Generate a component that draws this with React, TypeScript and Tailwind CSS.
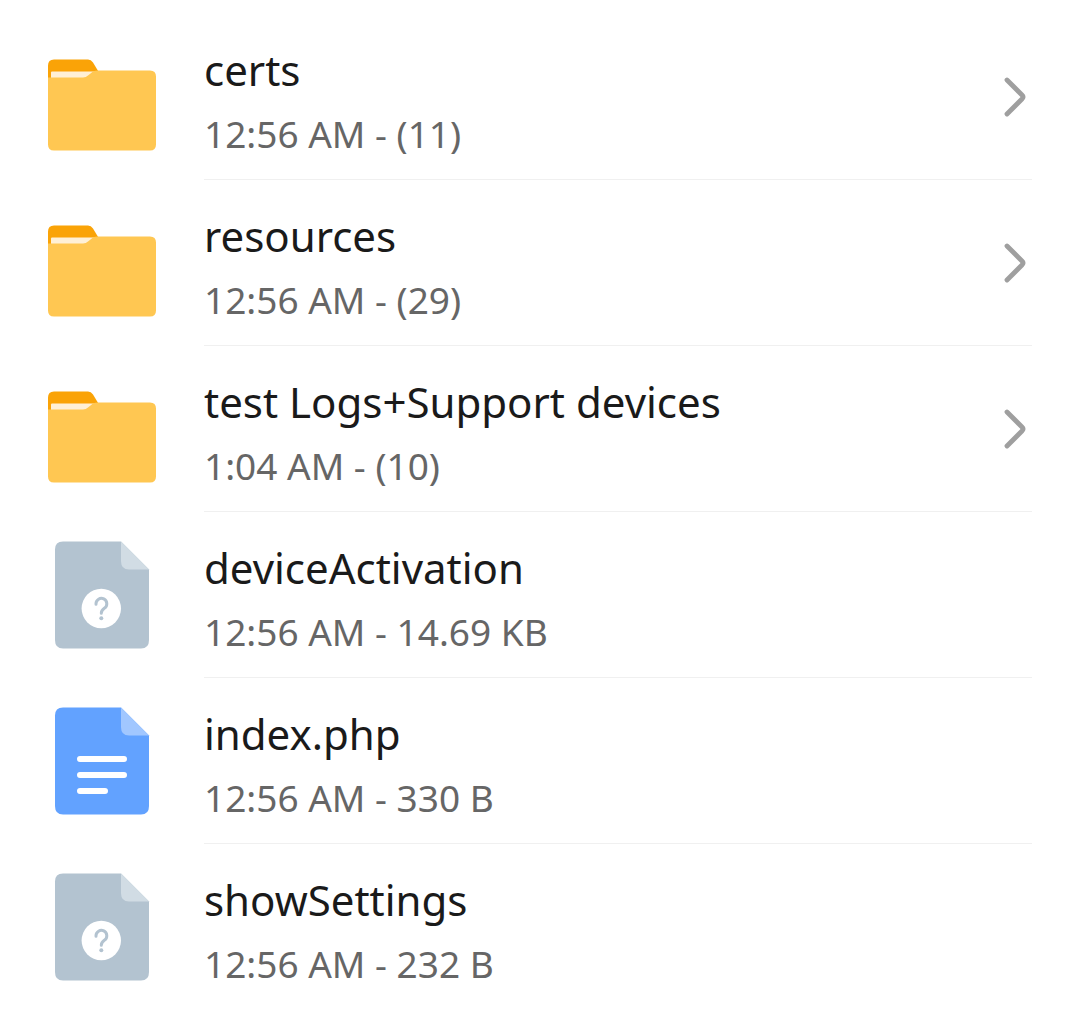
type Kind = "folder" | "unknown" | "text";

type Entry = { name: string; detail: string; kind: Kind };

const entries: Entry[] = [
  { name: "certs", detail: "12:56 AM - (11)", kind: "folder" },
  { name: "resources", detail: "12:56 AM - (29)", kind: "folder" },
  { name: "test Logs+Support devices", detail: "1:04 AM - (10)", kind: "folder" },
  { name: "deviceActivation", detail: "12:56 AM - 14.69 KB", kind: "unknown" },
  { name: "index.php", detail: "12:56 AM - 330 B", kind: "text" },
  { name: "showSettings", detail: "12:56 AM - 232 B", kind: "unknown" },
];

function FolderIcon() {
  return (
    <svg width="108" height="108" viewBox="0 -8.5 108 108" aria-hidden="true">
      <path d="M0 28V14Q0 8 6 8H40Q43 8 45 11L51 21V28Z" fill="#faa307" />
      <path d="M4 20H50L42 28H4Q3 28 3 26V21Q3 20 4 20Z" fill="#fff0d6" />
      <path d="M0 26H35Q38 26 40 24L45 20Q47 19 50 19H102Q108 19 108 25V93Q108 99 102 99H6Q0 99 0 93Z" fill="#ffc752" />
    </svg>
  );
}

function FileIcon({ kind }: { kind: Kind }) {
  const isText = kind === "text";
  return (
    <svg width="108" height="108" viewBox="0 0 108 108" aria-hidden="true">
      <path
        d="M15 0.5H73L101 28.5V99Q101 107.5 93 107.5H15Q7 107.5 7 99V8.5Q7 0.5 15 0.5Z"
        fill={isText ? "#62a2ff" : "#b3c3d0"}
      />
      <path d="M73 0.5L101 28.5H81Q73 28.5 73 20Z" fill={isText ? "#a1c7ff" : "#d1dce4"} />
      {isText ? (
        <path d="M32 52H76M32 68H76M32 84H57" stroke="#fff" strokeWidth="6" strokeLinecap="round" />
      ) : (
        <>
          <circle cx="53.3" cy="67.5" r="19.7" fill="#fff" />
          <path
            d="M48 63.2V62.8A5.4 5.4 0 1 1 56.6 67.1C54 68.9 53.3 69.8 53.3 72.2"
            fill="none"
            stroke="#b3c3d0"
            strokeWidth="3"
            strokeLinecap="round"
          />
          <circle cx="53.3" cy="77.2" r="2" fill="#b3c3d0" />
        </>
      )}
    </svg>
  );
}

function Chevron() {
  return (
    <svg className="shrink-0" width="32" height="44" viewBox="0 -1 32 44" aria-hidden="true">
      <path
        d="M7 5L22 20Q24 22 22 24L7 39"
        fill="none"
        stroke="#9f9f9f"
        strokeWidth="4.8"
        strokeLinecap="round"
      />
    </svg>
  );
}

export default function App() {
  return (
    <main className="min-h-screen bg-white pt-[14px] pb-2 font-['Noto_Sans',sans-serif]">
      <ul>
        {entries.map((entry) => (
          <li key={entry.name} className="group">
            <button type="button" className="flex w-full items-stretch gap-12 px-12 text-left">
              <span className="flex shrink-0 items-center">
                {entry.kind === "folder" ? <FolderIcon /> : <FileIcon kind={entry.kind} />}
              </span>
              <span className="flex min-w-0 flex-1 items-center justify-between border-b border-[#f0f0f0] pb-[1px] group-last:border-transparent">
                <span className="flex min-w-0 flex-col gap-1 pt-6 pb-4">
                  <span className="text-[42px] leading-[64px] text-[#1a1a1a]">{entry.name}</span>
                  <span className="text-[37px] leading-[56px] text-[#666666]">{entry.detail}</span>
                </span>
                {entry.kind === "folder" && <Chevron />}
              </span>
            </button>
          </li>
        ))}
      </ul>
    </main>
  );
}
